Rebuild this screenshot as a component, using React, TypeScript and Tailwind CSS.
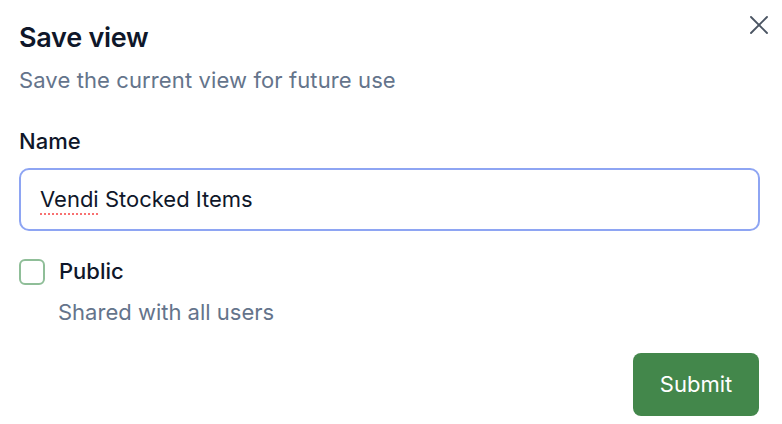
import { X } from "lucide-react";

export default function App() {
  return (
    <div
      className="relative w-[782px] h-[424px] bg-white text-[#0f172a]"
      style={{ fontFamily: "Inter, 'Noto Sans', sans-serif" }}
    >
      <button className="absolute right-[7px] top-[9px] text-[#4b5563]">
        <X size={32} strokeWidth={1.4} />
      </button>

      <div className="flex flex-col px-[19px] pt-[22px]">
        <h2 className="text-[27px] leading-[32px] font-semibold tracking-[-0.01em]">Save view</h2>
        <p className="mt-[12px] text-[22px] leading-[28px] tracking-[0.005em] text-[#64748b]">
          Save the current view for future use
        </p>

        <label className="mt-[33px] text-[22px] leading-[28px] font-medium">Name</label>
        <div className="mt-[13px] h-[63px] w-[741px] rounded-[10px] border-2 border-[#8ea5f3] flex items-center px-[19px] text-[22px]">
          <span className="underline decoration-dotted decoration-[#f87171] decoration-2 underline-offset-[6px]">
            Vendi
          </span>
          <span className="whitespace-pre"> Stocked Items</span>
        </div>

        <div className="mt-[27px] flex items-center gap-[14px]">
          <div className="w-[26px] h-[26px] rounded-[6px] border-2 border-[#8fbe98]" />
          <span className="text-[22px] leading-[28px] font-medium -mt-[1px]">Public</span>
        </div>
        <p className="mt-[13px] pl-[39px] text-[22px] leading-[28px] text-[#64748b]">
          Shared with all users
        </p>

        <div className="mt-[27px] flex justify-end pr-[4px]">
          <button className="h-[63px] w-[126px] rounded-[8px] bg-[#43874b] text-white text-[22px]">
            Submit
          </button>
        </div>
      </div>
    </div>
  );
}
